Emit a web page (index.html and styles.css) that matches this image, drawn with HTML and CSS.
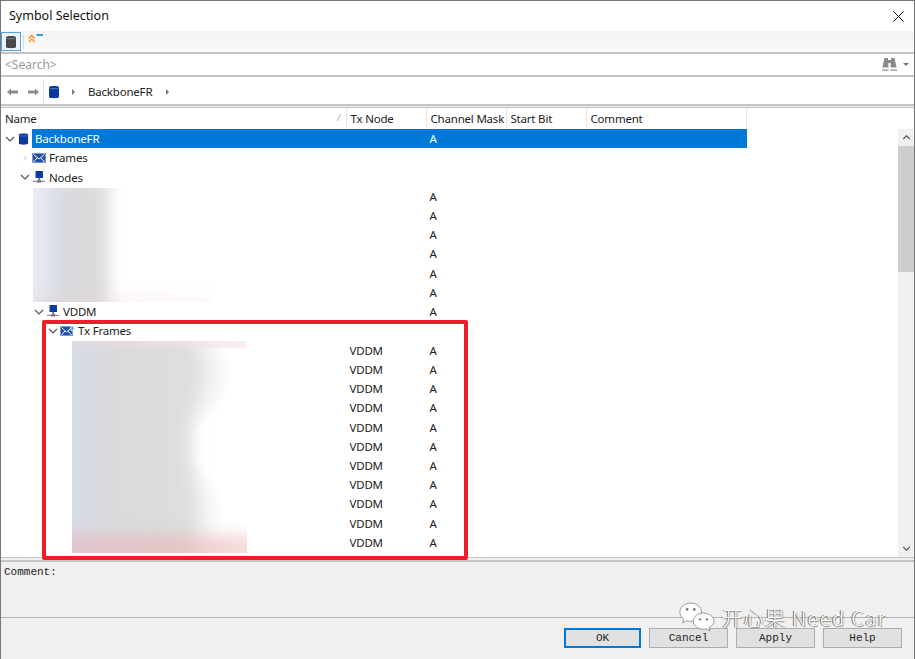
FILE: index.html
```html
<!DOCTYPE html>
<html lang="en">
<head>
<meta charset="utf-8">
<title>Symbol Selection</title>
<link rel="stylesheet" href="styles.css">
</head>
<body>
<svg class="defs" width="0" height="0" aria-hidden="true">
  <symbol id="db" viewBox="0 0 12 14"><path d="M1 2.200C1 .7 11 .7 11 2.200V12C11 13.600 1 13.600 1 12Z" fill="currentColor"/><path d="M1.500 3.200C3 4 9 4 10.500 3.200" fill="none" stroke="#fff" stroke-opacity=".45" stroke-width=".7"/></symbol>
  <symbol id="mail" viewBox="0 0 14 10"><rect x=".5" y=".5" width="13" height="9" fill="#1f4fa8" stroke="#7d97c9"/><path d="M1.500 1.500 7 6 12.500 1.500M1.500 9 5 5M12.500 9 9 5" fill="none" stroke="#fff" stroke-width="1"/></symbol>
  <symbol id="mail-out" viewBox="0 0 15 11"><rect x=".5" y="1.500" width="12" height="9" fill="#1f4fa8" stroke="#7d97c9"/><path d="M1.500 2.500 6.500 7 11.500 2.500M1.500 10 5 6M11.500 10 8 6" fill="none" stroke="#fff" stroke-width="1"/><path d="M11 .5V6M11 .5 14.500 3.500 11 6Z" fill="#2f9be8" stroke="#fff" stroke-width=".5"/></symbol>
  <symbol id="node" viewBox="0 0 12 13"><rect x="2.500" y="0" width="7.500" height="7" rx=".6" fill="#0b3aa0"/><rect x="5.300" y="7" width="1.800" height="3" fill="#6f7f9f"/><rect x="0" y="9.800" width="12" height="1.200" fill="#8a8f98"/><rect x="4.300" y="9" width="3.800" height="2.600" fill="#6f7a8a"/></symbol>
  <symbol id="down" viewBox="0 0 10 6"><path d="M1 1 5 5 9 1" fill="none" stroke="#555" stroke-width="1.200"/></symbol>
  <symbol id="right" viewBox="0 0 10 10"><path d="M3 1 7 5 3 9" fill="none" stroke="#a6a6a6" stroke-width="1.200"/></symbol>
  <symbol id="tri" viewBox="0 0 4 8"><path d="M0 0 4 4 0 8Z" fill="#777"/></symbol>
</svg>

<div class="window">
  <header class="titlebar">
    <span class="title">Symbol Selection</span>
    <svg class="close" viewBox="0 0 11 11"><path d="M.5.5 10.500 10.500M10.500.5.5 10.500" stroke="#111" stroke-width="1" fill="none"/></svg>
  </header>

  <div class="toolbar">
    <span class="tool-btn"><svg class="i-db-tool"><use href="#db"/></svg></span>
    <span class="tool-sep"></span>
    <svg class="i-filter" viewBox="0 0 15 9"><path d="M.8 4.400 3.800 1.400 6.800 4.400M.8 8 3.800 5 6.800 8" fill="none" stroke="#f59a3c" stroke-width="1.500"/><rect x="8.500" y="0" width="6.500" height="2" fill="#2aa3e6"/></svg>
  </div>

  <div class="search">
    <span class="search-text">&lt;Search&gt;</span>
    <svg class="i-bino" viewBox="0 0 15 15"><path d="M2.500 1H6V3H9V1H12.500L14.600 10.500H8.600V6H6.400V10.500H.4Z" fill="#8b8b8b"/><rect x="0" y="12.400" width="6.500" height="1.400" fill="#9a9a9a"/><rect x="8.500" y="12.400" width="6.500" height="1.400" fill="#9a9a9a"/></svg>
    <svg class="i-drop" viewBox="0 0 6 3"><path d="M0 0H6L3 3Z" fill="#777"/></svg>
  </div>

  <nav class="crumbs">
    <span class="nav-arrows">
      <svg class="i-arrow" viewBox="0 0 11 8"><path d="M0 4 4 .5V2.500H11V5.500H4V7.500Z" fill="#8c8c8c"/></svg>
      <svg class="i-arrow" viewBox="0 0 11 8"><path d="M11 4 7 .5V2.500H0V5.500H7V7.500Z" fill="#8c8c8c"/></svg>
    </span>
    <svg class="i-db i-db-nav"><use href="#db"/></svg>
    <svg class="i-tri"><use href="#tri"/></svg>
    <span class="crumb">BackboneFR</span>
    <svg class="i-tri"><use href="#tri"/></svg>
  </nav>

  <section class="tree">
    <div class="columns">
      <div class="head">
        <span class="hcell hname">Name<i class="sort">/</i></span>
        <span class="hcell">Tx Node</span>
        <span class="hcell">Channel Mask</span>
        <span class="hcell">Start Bit</span>
        <span class="hcell">Comment</span>
      </div>
      <div class="rows">
        <div class="row selected"><span class="name l0"><svg class="chev"><use href="#down"/></svg><svg class="i-db i-db-white"><use href="#db"/></svg><b>BackboneFR</b></span><span></span><span>A</span></div>
        <div class="row"><span class="name l1"><svg class="chev"><use href="#right"/></svg><svg class="i-mail"><use href="#mail"/></svg><b>Frames</b></span><span></span><span></span></div>
        <div class="row"><span class="name l1"><svg class="chev"><use href="#down"/></svg><svg class="i-node"><use href="#node"/></svg><b>Nodes</b></span><span></span><span></span></div>
        <div class="row"><span class="name"></span><span></span><span>A</span></div>
        <div class="row"><span class="name"></span><span></span><span>A</span></div>
        <div class="row"><span class="name"></span><span></span><span>A</span></div>
        <div class="row"><span class="name"></span><span></span><span>A</span></div>
        <div class="row"><span class="name"></span><span></span><span>A</span></div>
        <div class="row"><span class="name"></span><span></span><span>A</span></div>
        <div class="row"><span class="name l2"><svg class="chev"><use href="#down"/></svg><svg class="i-node"><use href="#node"/></svg><b>VDDM</b></span><span></span><span>A</span></div>
        <div class="row"><span class="name l3"><svg class="chev"><use href="#down"/></svg><svg class="i-mail-out"><use href="#mail-out"/></svg><b>Tx Frames</b></span><span></span><span></span></div>
        <div class="row"><span class="name"></span><span>VDDM</span><span>A</span></div>
        <div class="row"><span class="name"></span><span>VDDM</span><span>A</span></div>
        <div class="row"><span class="name"></span><span>VDDM</span><span>A</span></div>
        <div class="row"><span class="name"></span><span>VDDM</span><span>A</span></div>
        <div class="row"><span class="name"></span><span>VDDM</span><span>A</span></div>
        <div class="row"><span class="name"></span><span>VDDM</span><span>A</span></div>
        <div class="row"><span class="name"></span><span>VDDM</span><span>A</span></div>
        <div class="row"><span class="name"></span><span>VDDM</span><span>A</span></div>
        <div class="row"><span class="name"></span><span>VDDM</span><span>A</span></div>
        <div class="row"><span class="name"></span><span>VDDM</span><span>A</span></div>
        <div class="row"><span class="name"></span><span>VDDM</span><span>A</span></div>
      </div>
    </div>
    <div class="scrollbar">
      <span class="sb-btn"><svg class="sb-chev" viewBox="0 0 10 6"><path d="M1 5 5 1 9 5" fill="none" stroke="#555" stroke-width="1.500"/></svg></span>
      <span class="sb-thumb"></span>
      <span class="sb-track"></span>
      <span class="sb-btn"><svg class="sb-chev" viewBox="0 0 10 6"><path d="M1 1 5 5 9 1" fill="none" stroke="#555" stroke-width="1.500"/></svg></span>
    </div>
    <div class="blur blur-nodes"></div>
    <div class="blur blur-frames"></div>
    <div class="highlight"></div>
  </section>

  <section class="comment">Comment:</section>

  <footer class="buttons">
    <button class="btn btn-default">OK</button>
    <button class="btn">Cancel</button>
    <button class="btn">Apply</button>
    <button class="btn">Help</button>
  </footer>

  <div class="watermark">
    <svg class="i-wechat" viewBox="0 0 40 34"><path d="M13 1C6 1 1 5.400 1 11C1 14.200 2.700 16.800 5.200 18.700L4 23L8.800 20.600C10.300 21 11.600 21.100 13 21.100C20 21.100 25 16.600 25 11C25 5.400 20 1 13 1Z" fill="#fff" stroke="#666" stroke-width=".7"/><path d="M27 12C20.800 12 16 16 16 21C16 26 20.800 30 27 30C28.200 30 29.400 29.800 30.500 29.500L34.500 32L33.500 28C36.800 26.200 39 23.800 39 21C39 16 33.200 12 27 12Z" fill="#fff" stroke="#666" stroke-width=".7"/><circle cx="9" cy="8" r="1.500" fill="#777"/><circle cx="17" cy="8" r="1.500" fill="#777"/><circle cx="23.500" cy="19" r="1.300" fill="#777"/><circle cx="31" cy="19" r="1.300" fill="#777"/></svg>
    <span class="wm-text">开心果 Need Car</span>
  </div>
</div>
</body>
</html>
```

FILE: styles.css
```css
* { box-sizing: border-box; }
html, body { margin: 0; padding: 0; }
body { width: 915px; height: 659px; overflow: hidden; background: #f0f0f0; font: 11.5px "Noto Sans", "Open Sans", "Liberation Sans", sans-serif; letter-spacing: -.2px; color: #222; }
.defs { position: absolute; }

.window { position: relative; width: 915px; height: 659px; display: flex; flex-direction: column; border: 1px solid #777; border-bottom: 0; background: #f0f0f0; }

.titlebar { height: 30px; flex: none; background: #fff; display: flex; align-items: center; justify-content: space-between; padding: 0 10px 2px 8px; }
.title { font-size: 12.5px; letter-spacing: 0; color: #111; }
.close { width: 11px; height: 11px; margin-top: 2px; }

.toolbar { height: 21px; flex: none; background: linear-gradient(#f4f4f4, #fafafa); display: flex; align-items: flex-start; padding-top: 1px; }
.tool-btn { width: 20px; height: 19px; border: 1px solid #5ba3dc; background: #eaf3fb; display: flex; align-items: center; justify-content: center; }
.i-db-tool { width: 12px; height: 14px; color: #484848; }
.tool-sep { width: 1px; height: 14px; margin: 3px 3px 0 2px; background: #d8d8d8; }
.i-filter { width: 15px; height: 9px; margin-top: 2px; margin-left: 1px; }

.search { height: 25px; flex: none; background: #fff; border-top: 2px solid #c4c4c4; border-bottom: 2px solid #c4c4c4; display: flex; align-items: center; padding: 0 5px 0 4px; }
.search-text { color: #999; flex: 1; font-size: 12px; letter-spacing: 0; }
.i-bino { width: 15px; height: 15px; margin-right: 6px; }
.i-drop { width: 6px; height: 3px; }

.crumbs { height: 29px; flex: none; background: #fff; border-top: 2px solid #fff; border-bottom: 2px solid #c4c4c4; display: flex; align-items: center; }
.nav-arrows { width: 43px; height: 100%; display: flex; align-items: center; gap: 10px; padding-left: 6px; border-right: 1px solid #e3e3e3; }
.i-arrow { width: 11px; height: 8px; }
.i-db { width: 12px; height: 14px; color: #0b3a9c; }
.i-db-nav { margin-left: 4px; }
.i-tri { width: 3px; height: 6px; }
.i-db-nav + .i-tri { margin-left: 12px; }
.crumb { margin: 0 14px 0 13px; }

.tree { position: relative; height: 451px; flex: none; margin-top: 1px; background: #fff; border-top: 1px solid #c4c4c4; border-bottom: 1px solid #c4c4c4; display: flex; }
.columns { flex: 1; }
.head { display: grid; grid-template-columns: 346px 80px 80px 80px 160px; width: 746px; height: 21px; }
.hcell { display: flex; align-items: center; padding-left: 3.5px; border-right: 1px solid #e5e5e5; white-space: nowrap; }
.hname { position: relative; padding-left: 4px; }
.sort { position: absolute; right: 6px; top: 4px; font-size: 8px; color: #999; }

.row { display: grid; grid-template-columns: 346px 80px 80px; width: 746px; height: 19.24px; line-height: 19px; }
.row > span:not(.name) { padding-left: 2.5px; }
.name { display: flex; align-items: center; }
.name b { font-weight: 400; white-space: nowrap; }
.selected { background: linear-gradient(90deg, transparent 31px, #0078d7 31px); color: #fff; }
.selected b { padding-left: 4px; }
.chev { width: 10px; height: 6px; flex: none; margin-right: 2px; }
.i-mail { width: 14px; height: 10px; flex: none; margin-right: 3px; }
.i-mail-out { width: 15px; height: 11px; flex: none; margin-right: 3px; }
.i-node { width: 12px; height: 13px; flex: none; margin: 0 4px 0 1px; }
.name .i-db { width: 11px; height: 14px; margin: 0 2px 0 1px; }
.l0 { padding-left: 4px; }
.l1 { padding-left: 19px; }
.l2 { padding-left: 33px; }
.l3 { padding-left: 47px; }

.scrollbar { width: 16px; flex: none; display: flex; flex-direction: column; background: #f0f0f0; margin-top: 21px; }
.sb-btn { height: 17px; flex: none; display: flex; align-items: center; justify-content: center; }
.sb-chev { width: 9px; height: 5px; }
.sb-thumb { height: 126px; flex: none; background: #cdcdcd; }
.sb-track { flex: 1; }

.blur { position: absolute; overflow: hidden; background: #fff; }
.blur::before, .blur::after { content: ""; position: absolute; filter: blur(8px); }
.blur-nodes { left: 32px; top: 80px; width: 180px; height: 114px; }
.blur-nodes::before { left: -14px; top: -12px; width: 90px; height: 140px; background: linear-gradient(90deg, #eceef4 0, #e6e9f1 30%, #dadde8 38%, #d9d9d9 65%, #dcdcdc 100%); }
.blur-nodes::after { left: -10px; right: -10px; bottom: -8px; height: 12px; background: linear-gradient(90deg, rgba(225, 190, 195, .4), rgba(250, 215, 215, .4) 60%, rgba(255, 235, 235, .4)); }
.blur-frames { left: 71px; top: 233px; width: 175px; height: 212px; background:
  linear-gradient(90deg, rgba(228, 214, 222, .9), rgba(251, 236, 236, .9)) top / 100% 7px no-repeat,
  radial-gradient(ellipse 100px 75px at 60px 32px, #dedede 55%, rgba(255, 255, 255, 0) 100%),
  radial-gradient(ellipse 92px 75px at 60px 172px, #dedede 50%, rgba(255, 255, 255, 0) 100%),
  #fff; }
.blur-frames::before { left: -14px; top: 4px; width: 134px; height: 230px; background: linear-gradient(90deg, #d8dcea 0, #d6dae6 20%, #dadadc 38%, #dedede 100%); }
.blur-frames::after { left: -14px; right: -14px; bottom: -9px; height: 27px; background: linear-gradient(90deg, rgba(228, 190, 198, .8), rgba(230, 190, 192, .85) 60%, rgba(248, 215, 215, .8)); }
.highlight { position: absolute; left: 41px; top: 211.5px; width: 426px; height: 240px; border: 4.5px solid #ef1c2c; border-radius: 2px; }

.comment { height: 58px; flex: none; margin-top: 2px; border-top: 2px solid #c4c4c4; border-bottom: 1px solid #b4b4b4; padding: 3px; font: 11px/14px "Liberation Mono", monospace; letter-spacing: 0; color: #222; }

.buttons { flex: 1; display: flex; justify-content: flex-end; align-items: flex-start; gap: 8px; padding: 10px 12px 0 0; }
.btn { width: 79px; height: 20px; padding: 0; background: #e1e1e1; border: 1px solid #adadad; font: 11px/16px "Liberation Mono", monospace; color: #222; }
.btn-default { width: 77px; border: 2px solid #0078d7; }

.watermark { position: absolute; left: 678px; top: 601px; display: flex; align-items: center; gap: 7px; }
.i-wechat { width: 36px; height: 31px; }
.wm-text { font: 300 20px "Noto Sans CJK SC", "Noto Sans", sans-serif; letter-spacing: 1.4px; color: #fff; text-shadow: -1px 0 #666, 1px 1px 1px #888; white-space: nowrap; }
```
